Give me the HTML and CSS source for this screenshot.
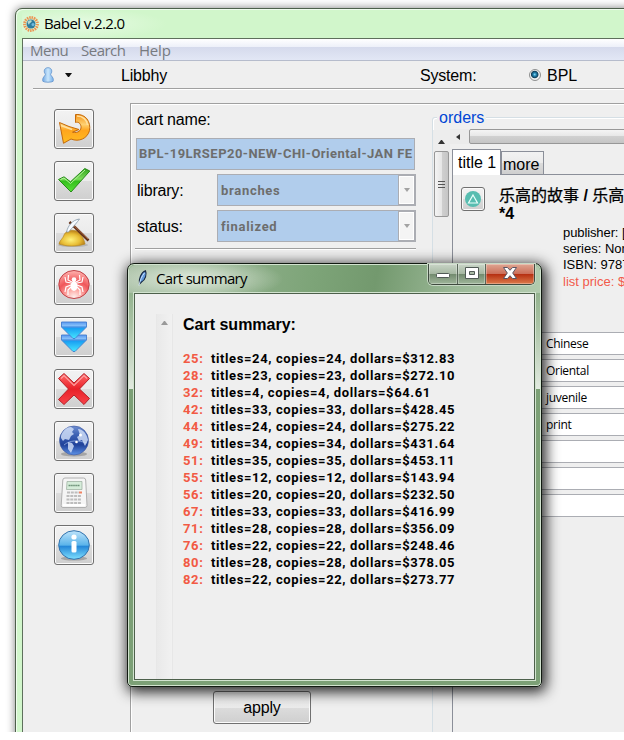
FILE: index.html
```html
<!DOCTYPE html>
<html lang="en">
<head>
<meta charset="utf-8">
<title>Babel v.2.2.0</title>
<link rel="stylesheet" href="styles.css">
</head>
<body>
<svg width="0" height="0" class="defs" aria-hidden="true">
  <defs>
    <linearGradient id="gold" x1="0" y1="0" x2="0" y2="1"><stop offset="0" stop-color="#f59416"/><stop offset=".35" stop-color="#ffd071"/><stop offset=".55" stop-color="#ffa51e"/><stop offset="1" stop-color="#ffbd20"/></linearGradient>
    <linearGradient id="green" x1="0" y1="0" x2="0" y2="1"><stop offset="0" stop-color="#31a51c"/><stop offset=".45" stop-color="#7ddd5c"/><stop offset=".55" stop-color="#34c01d"/><stop offset="1" stop-color="#5be23b"/></linearGradient>
    <radialGradient id="sand" cx=".45" cy=".6" r=".6"><stop offset="0" stop-color="#fff27c"/><stop offset=".6" stop-color="#e8bd35"/><stop offset="1" stop-color="#b77c18"/></radialGradient>
    <radialGradient id="red" cx=".5" cy=".95" r=".95"><stop offset="0" stop-color="#fff0ee"/><stop offset=".3" stop-color="#fda5a0"/><stop offset=".6" stop-color="#f0565a"/><stop offset="1" stop-color="#ffb5b1"/></radialGradient>
    <linearGradient id="sky" x1="0" y1="0" x2="0" y2="1"><stop offset="0" stop-color="#5797f1"/><stop offset=".25" stop-color="#8dc5fa"/><stop offset=".35" stop-color="#189cf2"/><stop offset="1" stop-color="#45e7ff"/></linearGradient>
    <linearGradient id="cross" x1="0" y1="0" x2="0" y2="1"><stop offset="0" stop-color="#ff6b6b"/><stop offset=".5" stop-color="#e92028"/><stop offset="1" stop-color="#f7444a"/></linearGradient>
    <linearGradient id="globe" x1="0" y1="0" x2="0" y2="1"><stop offset="0" stop-color="#6f8ed0"/><stop offset=".3" stop-color="#3d62b4"/><stop offset=".65" stop-color="#20429a"/><stop offset="1" stop-color="#5d92e6"/></linearGradient>
    <linearGradient id="info" x1="0" y1="0" x2="0" y2="1"><stop offset="0" stop-color="#bfe4fb"/><stop offset=".5" stop-color="#5bb4ea"/><stop offset=".55" stop-color="#2588d8"/><stop offset="1" stop-color="#7fe0ff"/></linearGradient>
    <linearGradient id="user" x1="0" y1="0" x2="1" y2="0"><stop offset="0" stop-color="#6fa6e2"/><stop offset=".5" stop-color="#c9e6fc"/><stop offset="1" stop-color="#76afe9"/></linearGradient>
  </defs>
</svg>
<div class="desktop">
  <main class="window">
    <header class="titlebar">
      <svg class="app-icon" viewBox="0 0 16 16"><circle cx="8" cy="8" r="6.400" fill="none" stroke="#eb9350" stroke-width="3" stroke-dasharray="1.500 .8"/><circle cx="8" cy="8" r="4.500" fill="#2f7d9e"/><path d="M4.500 6c1-1.500 3-2.200 4-1.500s-.5 2-1.500 2.500-.5 2-1.500 1.500z" fill="#b5d9d0"/><circle cx="10" cy="8.500" r="1.500" fill="#72b9dd"/></svg>
      <span>Babel v.2.2.0</span>
    </header>
    <div class="client">
      <nav class="menubar"><span class="m1">Menu</span><span class="m2">Search</span><span class="m3">Help</span></nav>
      <div class="toolbar">
        <svg class="user" viewBox="0 0 14 16"><path d="M4.200 6.800C2.600 5.200 2.700.7 7 .7s4.400 4.500 2.800 6.100c-.6.8.3 1.600 1.500 3.200 1.300 1.700 1.200 3.300.8 4.300-1.500 1.200-8.700 1.200-10.200 0-.4-1-.5-2.600.8-4.300 1.200-1.600 2.100-2.400 1.500-3.200z" fill="url(#user)" stroke="#6a9ad0" stroke-width=".9"/></svg>
        <i class="caret"></i>
        <span class="lib">Libbhy</span>
        <span class="sys">System:</span>
        <i class="radio"></i>
        <span class="bpl">BPL</span>
      </div>
      <div class="workspace">
        <aside class="sidebar">
          <button class="tool"><svg viewBox="0 0 40 40"><path d="M21.500 5.500C32 4.500 37 13 35.500 21.500 33.500 29.500 25 33.300 17 30L9.500 34.300 5.500 13.500 15 17.500 25 20.500 18.500 23.200C24 24.500 27.500 21.500 27 17.500 26.500 14 24 12.500 21.500 13.500z" fill="url(#gold)" stroke="#c56a0b"/><path d="M7 16.500l11 4M23 7c6 0 10 4 10.500 9" stroke="#ffe0a0" stroke-width="1.500" fill="none"/></svg></button>
          <button class="tool"><svg viewBox="0 0 40 40"><path d="M4.500 18.500L10 15.800 16.500 20.800 30.800 7.500 35.800 10 17 31z" fill="url(#green)" stroke="#278a19"/><path d="M6.500 18.500l3.500-1.500 6.500 5.500L31 9" fill="none" stroke="#b5f29b"/></svg></button>
          <button class="tool"><svg viewBox="0 0 40 40"><ellipse cx="19" cy="32" rx="15" ry="2" fill="#999" opacity=".5"/><path d="M5 31C5 28 9 26 10.500 21 13 17 18 16.500 22.500 18 27 20 30 26 31 31 22 34 12 33.500 5 31z" fill="url(#sand)" stroke="#b48720" stroke-width=".7"/><path d="M15.500 9L34.500 27.500" stroke="#612f17" stroke-width="2.500"/><path d="M17 10L34 26" stroke="#c68459" stroke-width=".7"/><path d="M12.500 19C14 13 18 7 25.500 6c-2 3-7 8.500-11 13z" fill="#f7fbff" stroke="#8497a7" stroke-width=".8"/></svg></button>
          <button class="tool"><svg viewBox="0 0 40 40"><ellipse cx="20" cy="19.500" rx="15.200" ry="14" fill="url(#red)" stroke="#bf4046"/><ellipse cx="20" cy="21" rx="3.500" ry="5" fill="#fff"/><circle cx="20" cy="14.500" r="2.300" fill="#fff"/><path d="M18 17l-4-2 .5-5M22 17l4-2-.5-5M17 18l-5-1-1-5M23 18l5-1 1-5M17 20l-5 2-1 5M23 20l5 2 1 5M17 22l-3 3v5M23 22l3 3v5" stroke="#fff" stroke-width="1.200" fill="none"/></svg></button>
          <button class="tool"><svg viewBox="0 0 40 40"><g stroke="#437dce" stroke-width=".9" stroke-linejoin="round"><path d="M7.500 18h25v5L21 34.500h-2L7.500 23z" fill="url(#sky)"/><path d="M7.500 5h25v5L21 21.500h-2L7.500 10z" fill="url(#sky)"/></g><path d="M8 10h24M8 23h24" stroke="#4a87dc"/></svg></button>
          <button class="tool"><svg viewBox="0 0 40 40"><path d="M10 4.500L20 14 30 4.500 35.500 9.500 25.500 20 35.500 29.500 30 35.500 20 26 10 35.500 4.500 30.500 14.500 20 4.500 9.500z" fill="url(#cross)" stroke="#b51f27"/><path d="M7 9.500l3-3 10 10 10-10 3 3" fill="none" stroke="#ffa0a0" stroke-width="1.200"/></svg></button>
          <button class="tool"><svg viewBox="0 0 40 40"><ellipse cx="20" cy="33" rx="13" ry="2.500" fill="#777" opacity=".5"/><circle cx="20" cy="19.500" r="14.500" fill="url(#globe)" stroke="#3c559d" stroke-width=".6"/><path d="M7 15c1-4 5-9 10-9l3 2-2 3 2 2-3 2-2 4-4-1-2 2-2-3zM14 21l4 1 2 3-3 7-3-4zM24 8c5 0 9 5 10 11l-3 6-3-6-3 1-2-4 3-2z" fill="#d7e3fa" opacity=".8"/><path d="M10 24c6-5 14-5 23-2" stroke="#c8dfff" fill="none" opacity=".55"/><circle cx="26.500" cy="14" r="1.500" fill="#fff"/><circle cx="22.500" cy="21" r="1.300" fill="#fff"/></svg></button>
          <button class="tool"><svg viewBox="0 0 40 40"><path d="M11 5h18.500q2 0 2.200 2L33 32.500q0 2-2 2H9q-2 0-1.800-2L8.800 7q.2-2 2.200-2z" fill="#f5f5f5" stroke="#b0b0b0"/><path d="M9 32h22" stroke="#fff" stroke-width="2"/><path d="M13 8.500h15v8H12.500z" fill="#d5ecd9" stroke="#98aa9b" stroke-width=".7"/><path d="M14.500 12.500h11" stroke="#6c9277" stroke-width="1.400" stroke-dasharray="1.500 .4"/><path d="M13 19.500h12M12.500 23h15M12.500 26.500h15M12.500 30h15" stroke="#bdbdbd" stroke-width="2" stroke-dasharray="3 .8"/><path d="M25 19.500h3" stroke="#f08262" stroke-width="2"/></svg></button>
          <button class="tool"><svg viewBox="0 0 40 40"><ellipse cx="20" cy="33.500" rx="13" ry="2" fill="#777" opacity=".5"/><ellipse cx="20" cy="20" rx="15.300" ry="14.300" fill="url(#info)" stroke="#3373ad"/><circle cx="20" cy="12" r="2.600" fill="#fff"/><rect x="17.500" y="16" width="5" height="11.500" rx="1.500" fill="#fff"/></svg></button>
        </aside>
        <section class="panel">
          <div class="cart">
            <label class="cart-name">cart name:</label>
            <div class="entry"><span>BPL-19LRSEP20-NEW-CHI-Oriental-JAN FE</span></div>
            <div class="row"><label class="l-lib">library:</label><div class="combo"><span>branches</span><i></i></div></div>
            <div class="row"><label class="l-st">status:</label><div class="combo"><span>finalized</span><i></i></div></div>
            <hr>
            <button class="apply"><span>apply</span></button>
          </div>
          <div class="orders">
            <div class="legend"><span>orders</span></div>
            <div class="orders-body">
              <div class="vscroll"><b class="up"></b><div class="vthumb"><i></i><i></i><i></i></div></div>
              <div class="orders-main">
                <div class="hscroll"><b class="left"></b><div class="hthumb"></div></div>
                <div class="tabs"><div class="tab active"><span>title 1</span></div><div class="tab"><span>more</span></div></div>
                <div class="page">
                  <div class="book">
                    <button class="mini"><svg viewBox="0 0 16 16"><circle cx="8" cy="8" r="8" fill="#57bdb0"/><path d="M8 4l4.500 8h-9z" fill="none" stroke="#e9fffb" stroke-width="1.200"/></svg></button>
                    <div class="book-title"><span class="han">乐高的故事</span> / <span class="han">乐高</span><br><span class="star">*4</span></div>
                  </div>
                  <div class="meta"><div class="pub">publisher: [</div><div class="ser">series: Nor</div><div class="isbn">ISBN: 9787</div><div class="price">list price: $</div></div>
                  <div class="fields"><div>Chinese</div><div>Oriental</div><div>juvenile</div><div>print</div><div></div><div></div><div></div></div>
                </div>
              </div>
            </div>
          </div>
        </section>
      </div>
    </div>
  </main>

  <section class="dialog">
    <header class="dlg-title">
      <svg class="feather" viewBox="0 0 12 16"><path d="M2.500 14C1.500 9 4 2.500 8.500.8 10 4 8.500 10 4.500 12z" fill="#5f98dc" stroke="#14243e" stroke-width="1.100"/><path d="M2 15.500C3 10 5 6 7.500 3" fill="none" stroke="#d7ebff" stroke-width=".9"/></svg>
      <span class="dlg-name">Cart summary</span>
      <div class="controls">
        <b class="min"><svg viewBox="0 0 16 12"><rect x="1.500" y="6.500" width="13" height="4" rx="1" fill="#fff" stroke="#505a55"/></svg></b>
        <b class="max"><svg viewBox="0 0 16 12"><path fill-rule="evenodd" d="M1.500.5h13v11h-13zM5.500 4.500v3h5v-3z" fill="#fff" stroke="#505a55"/></svg></b>
        <b class="close"><svg viewBox="0 0 16 12"><path d="M1.500.5h4L8 3.300 10.500.5h4L10.700 6l3.800 5.500h-4L8 8.700 5.500 11.500h-4L5.300 6z" fill="#fff" stroke="#585563"/></svg></b>
      </div>
    </header>
    <div class="dlg-client">
      <div class="track"><b></b></div>
      <div class="summary">
        <h2><span>Cart summary:</span></h2>
        <p><em>25:</em><span>titles=24, copies=24, dollars=$312.83</span></p>
        <p><em>28:</em><span>titles=23, copies=23, dollars=$272.10</span></p>
        <p><em>32:</em><span>titles=4, copies=4, dollars=$64.61</span></p>
        <p><em>42:</em><span>titles=33, copies=33, dollars=$428.45</span></p>
        <p><em>44:</em><span>titles=24, copies=24, dollars=$275.22</span></p>
        <p><em>49:</em><span>titles=34, copies=34, dollars=$431.64</span></p>
        <p><em>51:</em><span>titles=35, copies=35, dollars=$453.11</span></p>
        <p><em>55:</em><span>titles=12, copies=12, dollars=$143.94</span></p>
        <p><em>56:</em><span>titles=20, copies=20, dollars=$232.50</span></p>
        <p><em>67:</em><span>titles=33, copies=33, dollars=$416.99</span></p>
        <p><em>71:</em><span>titles=28, copies=28, dollars=$356.09</span></p>
        <p><em>76:</em><span>titles=22, copies=22, dollars=$248.46</span></p>
        <p><em>80:</em><span>titles=28, copies=28, dollars=$378.05</span></p>
        <p><em>82:</em><span>titles=22, copies=22, dollars=$273.77</span></p>
      </div>
    </div>
  </section>
</div>
</body>
</html>
```
FILE: styles.css
```css
* { box-sizing: border-box; }
body { margin: 0; background: #fff; color: #000; font-family: "Liberation Sans", Arial, sans-serif; font-size: 16px; overflow: hidden; }
button { padding: 0; margin: 0; font: inherit; color: inherit; }
svg { display: block; }
.defs { position: absolute; }
.desktop { position: relative; width: 624px; height: 732px; overflow: hidden; }

/* main window frame */
.window { margin: 8px 0 0 15px; width: 640px; height: 760px; border: 1px solid #4d604b; border-radius: 7px 0 0 0; background: #d1f6cb; box-shadow: inset 1px 1px 0 #effced, 0 0 9px rgba(0,0,0,.5); padding-left: 6px; white-space: nowrap; }
.titlebar { height: 29px; display: flex; align-items: center; font-family: "Open Sans", sans-serif; font-size: 15px; letter-spacing: -.6px; background: radial-gradient(ellipse 90px 16px at 55px 15px, #e8fbe4, rgba(209,246,203,0)); }
.titlebar span { margin-top: -1px; }
.app-icon { width: 16px; height: 16px; margin: 0 5px 0 1px; }
.client { border: 1px solid #5e705c; border-right: 0; background: #efefef; height: 731px; }
.menubar { height: 22px; display: flex; align-items: center; padding-left: 7px; color: #777a80; font-family: "Open Sans", sans-serif; font-size: 15px; letter-spacing: -.5px; background: linear-gradient(#fff 0, #edf0f9 8px, #d5daec 8px, #e2e7f5 21px); border-bottom: 1px solid #b6bccc; }
.menubar span { line-height: 20px; }
.menubar .m2 { letter-spacing: -.5px; }
.menubar .m3 { letter-spacing: -.2px; }
.m1 { width: 51px; } .m2 { width: 58px; }
.toolbar { height: 29px; margin-left: 10px; border-bottom: 1px solid #fff; box-shadow: inset 0 -1px 0 #a0a0a0; display: grid; grid-template-columns: 32px 56px 299px 109px 18px 80px; align-items: center; padding-bottom: 1px; }
.toolbar span { margin-top: 2px; letter-spacing: -.2px; }
.toolbar .bpl { letter-spacing: 0; }
.user { width: 14px; height: 16px; margin-left: 8px; }
.caret { border: 3.500px solid transparent; border-top: 4px solid #111; border-bottom: 0; width: 7px; }
.radio { width: 12px; height: 12px; border-radius: 50%; border: 1px solid #8e8f8f; background: radial-gradient(circle at 47% 45%, #8fdcf5 0, #2287b5 1.500px, #123e59 3.300px, #f1f1f1 4.200px); }
.workspace { display: flex; height: 670px; }
.sidebar { width: 107px; padding: 19px 0 0 31px; display: flex; flex-direction: column; gap: 12px; flex: none; }
.tool, .mini, .apply { border: 1px solid #707070; border-radius: 3px; background: linear-gradient(#f2f2f2 0, #ebebeb 50%, #dcdcdc 50%, #cfcfcf 100%); box-shadow: inset 0 0 0 1px #fbfbfb; }
.tool { width: 40px; height: 40px; display: block; flex: none; }
.tool svg { width: 40px; height: 40px; margin: -1px; }
.panel { margin-top: 13px; width: 520px; flex: none; border: 1px solid #a0a0a0; box-shadow: inset 1px 1px 0 #fff; display: flex; }
.cart { width: 301px; padding-left: 5px; flex: none; }
.cart-name { display: block; padding-left: 1px; line-height: 18px; margin-top: 7px; height: 27px; letter-spacing: -.2px; }
.entry { width: 279px; height: 32px; border: 1px solid #abadb3; background: #b1cdec; color: #6d6d6d; font: bold 13px/30px Roboto, sans-serif; padding: 0 0 0 2px; }
.entry span { display: block; letter-spacing: .47px; }
.row { display: flex; margin-top: 4px; height: 32px; align-items: center; }
.row label { width: 81px; padding: 1px 0 0 1px; letter-spacing: -.2px; }
.combo { width: 199px; height: 32px; border: 1px solid #abadb3; background: #b1cdec; display: flex; color: #6d6d6d; font: bold 13px/31px Roboto, sans-serif; letter-spacing: .7px; padding-left: 3px; }
.combo span { flex: 1; }
.combo i { width: 17px; border: 1px solid #abadb3; background: #f4f4f4; box-shadow: inset 0 0 0 1px #fff; display: flex; align-items: center; justify-content: center; }
.combo i::after { content: ""; border: 3.500px solid transparent; border-top: 4px solid #a2a2a2; border-bottom: 0; }
hr { width: 281px; height: 2px; margin: 6px 0 0 -1px; border: 0; border-top: 1px solid #a0a0a0; border-bottom: 1px solid #fff; }
.apply { display: block; width: 98px; height: 33px; margin: 441px 0 0 77px; letter-spacing: -.2px; }

/* orders group */
.orders { margin-top: 13px; width: 214px; border: 1px solid #d5dfe5; border-bottom: 0; border-radius: 3px 0 0 0; box-shadow: inset 1px 1px 0 #fff; flex: none; }
.legend { color: #0046d5; line-height: 18px; height: 21px; margin-top: -9px; padding-left: 4px; }
.legend span { display: inline-block; background: #efefef; padding: 0 2px; }
.orders-body { display: flex; }
.vscroll { width: 17px; height: 604px; padding: 10px 1px 0; background: #ededed; }
.up { display: block; margin: 0 auto 7px; width: 7px; border: 3.500px solid transparent; border-bottom: 4px solid #333; border-top: 0; }
.vthumb { width: 15px; height: 66px; border: 1px solid #979797; border-radius: 2px; background: linear-gradient(90deg, #f4f4f4, #e6e6e6 50%, #d0d0d0 50%, #c5c5c5); display: flex; flex-direction: column; align-items: center; justify-content: center; gap: 2px; }
.vthumb i { width: 7px; height: 1px; background: #555; }
.orders-main { flex: 1; }
.hscroll { display: flex; height: 15px; margin-top: -1px; align-items: center; background: #ebebeb; }
.left { border: 3.500px solid transparent; border-right: 4px solid #333; border-left: 0; margin: 0 9px 0 6px; }
.hthumb { flex: 1; height: 15px; border: 1px solid #979797; border-radius: 2px; background: linear-gradient(#f4f4f4, #e6e6e6 50%, #d0d0d0 50%, #c5c5c5); }
.tabs { display: flex; align-items: flex-end; height: 30px; margin-left: 2px; }
.tab { border: 1px solid #8b8f99; border-bottom: 0; background: linear-gradient(#f2f2f2, #ebebeb 50%, #dcdcdc 50%, #cfcfcf); width: 43px; height: 23px; padding-left: 1px; line-height: 25px; }
.tab.active { background: #fff; width: 49px; padding-left: 5px; line-height: 25px; position: relative; margin-bottom: -1px; height: 26px; }
.page { border: 1px solid #8b8f99; margin-left: 2px; height: 560px; width: 195px; }
.book { display: flex; padding: 12px 0 0 8px; height: 50px; }
.mini { width: 24px; height: 24px; }
.mini svg { width: 16px; height: 16px; margin: auto; }
.book-title { margin-left: 14px; font: bold 16px/18px "Liberation Sans", "Noto Sans CJK SC", sans-serif; }
.han { font-weight: 400; -webkit-text-stroke: .25px #000; }
.meta { margin-left: 110px; font-size: 13px; line-height: 16px; height: 107px; }
.pub { letter-spacing: -.1px; }
.price { color: #f25a4b; margin-top: 1px; }
.fields { display: flex; flex-direction: column; gap: 4px; }
.fields div { height: 23px; border: 1px solid #abadb3; background: #fff; padding-left: 92px; font: 12px/21px "Open Sans", sans-serif; letter-spacing: -.3px; }

/* summary dialog */
.dialog { position: absolute; left: 127px; top: 263px; width: 415px; height: 424px; border: 1px solid #111a11; border-radius: 7px 7px 5px 5px; padding: 0 6px 6px; background: linear-gradient(#7fa57a 0, #a9c2a4 60px, #e2eae0 125px, #7ca076 125px, #7ca076 100%); box-shadow: inset 0 0 0 1px #d2e3cf, 2px 3px 14px 2px rgba(0,0,0,.85); }
.dlg-title { height: 28px; margin: 1px -5px 0; border-radius: 6px 6px 0 0; display: flex; padding: 0 13px 0 8px; font: 15px/27px "Open Sans", sans-serif; letter-spacing: -.7px; background: radial-gradient(ellipse 92px 22px at 62px 14px, rgba(219,230,216,.9) 20%, rgba(200,217,196,0)), linear-gradient(100deg, #a4bca0, #7da478 45%, #73996e 60%, #9cb998 80%, #b2cbae); }
.feather { width: 12px; height: 16px; margin: 5px 7px 0 0; }
.dlg-name { flex: 1; }
.controls { display: flex; height: 21px; margin: -1px -8px 0 0; border: 1px solid #3f4b3f; border-top: 0; border-radius: 0 0 5px 5px; overflow: hidden; box-shadow: 0 0 0 1px #c6d8c4; }
.controls b { display: flex; align-items: center; justify-content: center; background: linear-gradient(#c9d5c7, #a5b7a1 50%, #71896d 50%, #a0b69b); box-shadow: inset 0 0 0 1px rgba(255,255,255,.3); }
.controls svg { width: 16px; height: 12px; margin-top: -2px; }
.min { width: 29px; border-right: 1px solid #586658; } .max { width: 28px; border-right: 1px solid #586658; }
.controls .close { width: 48px; background: linear-gradient(#dfa692, #cb6d58 50%, #b52d10 50%, #dc7b4b); }
.dlg-client { width: 401px; height: 387px; border: 1px solid #4d604b; background: #efefef; box-shadow: 0 0 0 1px #d2e3cf; display: flex; padding: 20px 0 0 21px; }
.track { width: 17px; border: 1px solid #e7e7e7; border-width: 0 1px; background: linear-gradient(90deg, #e9e9e9, #f1f1f1); padding: 7px 0 0 4px; }
.track b { display: block; width: 7px; border: 3.500px solid transparent; border-bottom: 4px solid #999; border-top: 0; }
.summary { padding: 1px 0 0 10px; }
h2 { margin: 0 0 15px; font-size: 16px; line-height: 20px; white-space: nowrap; }
p { margin: 0; height: 17px; display: flex; font: bold 13px/17px Roboto, sans-serif; letter-spacing: .61px; white-space: nowrap; }
em { font-style: normal; color: #f25a44; width: 28px; }
```
